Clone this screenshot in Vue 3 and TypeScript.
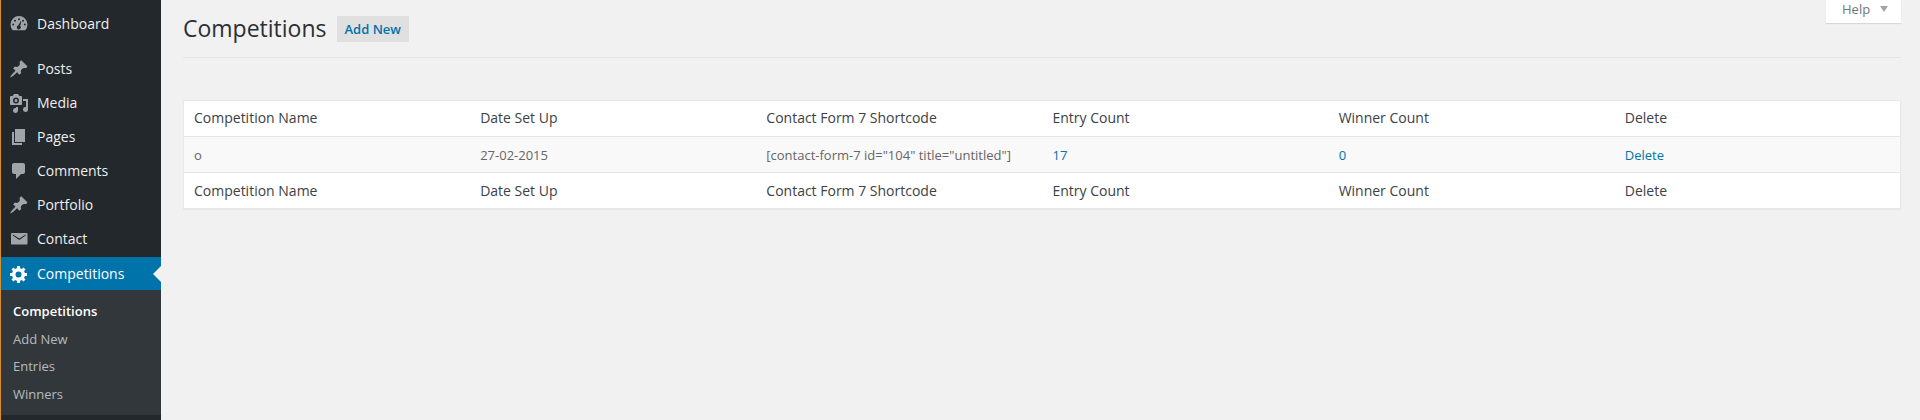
<script setup lang="ts">
interface MenuItem { label: string; icon: string; active?: boolean; gap?: boolean }
const menu: MenuItem[] = [
  { label: 'Dashboard', icon: 'dash', gap: true },
  { label: 'Posts', icon: 'pin' },
  { label: 'Media', icon: 'media' },
  { label: 'Pages', icon: 'pages' },
  { label: 'Comments', icon: 'comment' },
  { label: 'Portfolio', icon: 'pin' },
  { label: 'Contact', icon: 'mail' },
  { label: 'Competitions', icon: 'gear', active: true },
]
const sub = ['Competitions', 'Add New', 'Entries', 'Winners']
const cols = ['Competition Name', 'Date Set Up', 'Contact Form 7 Shortcode', 'Entry Count', 'Winner Count', 'Delete']
</script>

<template>
  <div class="page">
    <aside class="side">
      <ul class="menu">
        <li v-for="m in menu" :key="m.label" class="item" :class="{ active: m.active, gap: m.gap }">
          <svg class="ico" viewBox="0 0 20 20" aria-hidden="true">
            <path v-if="m.icon === 'dash'" fill-rule="evenodd" d="M3.76 16.24A8.5 8.5 0 1 1 16.24 16.24H3.76ZM10 4.3a1 1 0 1 0 0 2 1 1 0 0 0 0-2ZM6 5.8a1 1 0 1 0 0 2 1 1 0 0 0 0-2ZM14 5.8a1 1 0 1 0 0 2 1 1 0 0 0 0-2ZM4.2 9.4a1 1 0 1 0 0 2 1 1 0 0 0 0-2ZM15.8 9.4a1 1 0 1 0 0 2 1 1 0 0 0 0-2ZM11.7 7.2 9.2 11.6a1.9 1.9 0 1 0 2 .5L12.4 7.4Z" />
            <path v-else-if="m.icon === 'pin'" d="M10.44 3.02l1.82-1.82 6.36 6.35-1.83 1.82c-1.05-.68-2.48-.57-3.41.36l-.75.75c-.92.93-1.04 2.35-.35 3.41l-1.83 1.82-2.41-2.41-2.8 2.79c-.42.42-3.38 2.71-3.8 2.29s1.86-3.39 2.28-3.81l2.79-2.79L4.1 9.36l1.83-1.82c1.05.69 2.48.57 3.4-.36l.75-.75c.93-.92 1.05-2.35.36-3.41z" />
            <path v-else-if="m.icon === 'media'" fill-rule="evenodd" d="M13 11V4c0-.55-.45-1-1-1h-1.67L9 1H5L3.67 3H2c-.55 0-1 .45-1 1v7c0 .55.45 1 1 1h10c.55 0 1-.45 1-1ZM7 4.5a3 3 0 1 1 0 6 3 3 0 0 1 0-6ZM14 6h5v10.5a2.5 2.5 0 1 1-2-2.45V8h-3V6ZM7 14h2v3.5A2.5 2.5 0 1 1 7 15v-1Z M7 6a1.5 1.5 0 1 0 0 3 1.5 1.5 0 0 0 0-3Z" />
            <path v-else-if="m.icon === 'pages'" d="M6 15V2h10v13H6zm-1 1h8v2H3V5h2v11z" />
            <path v-else-if="m.icon === 'comment'" d="M5 2h9c1.1 0 2 .9 2 2v7c0 1.1-.9 2-2 2h-2l-5 5v-5H5c-1.1 0-2-.9-2-2V4c0-1.1.9-2 2-2z" />
            <path v-else-if="m.icon === 'mail'" fill-rule="evenodd" d="M3 4h14.500c.55 0 1 .45 1 1v9.500c0 .55-.45 1-1 1H3c-.55 0-1-.45-1-1V5c0-.55.45-1 1-1ZM3.800 6.500 10.250 11l6.450-4.500v-1l-6.450 4-6.450-4v1Z" />
            <path v-else fill-rule="evenodd" d="M18 12h-2.18c-.17.7-.44 1.35-.81 1.93l1.54 1.54-2.1 2.1-1.54-1.54c-.58.36-1.23.63-1.91.79V19H8v-2.18c-.68-.16-1.33-.43-1.91-.79l-1.54 1.54-2.12-2.12 1.54-1.54c-.36-.58-.63-1.23-.79-1.91H1V9.03h2.17c.16-.7.44-1.35.8-1.94L2.43 5.55l2.1-2.1 1.54 1.54c.58-.37 1.24-.64 1.93-.81V2h3v2.18c.68.16 1.33.43 1.91.79l1.54-1.54 2.12 2.12-1.54 1.54c.36.59.64 1.24.8 1.94H18V12ZM9.500 13.500a3 3 0 1 0 0-6 3 3 0 0 0 0 6Z" />
          </svg>
          <span>{{ m.label }}</span>
        </li>
      </ul>
      <ul class="sub">
        <li v-for="(s, i) in sub" :key="s" :class="{ cur: i === 0 }">{{ s }}</li>
      </ul>
    </aside>
    <main class="main">
      <div class="help">Help <i class="tri"></i></div>
      <header class="head">
        <h1>Competitions</h1>
        <span class="add">Add New</span>
      </header>
      <div class="rule"></div>
      <table class="tbl">
        <thead>
          <tr><th v-for="c in cols" :key="c">{{ c }}</th></tr>
        </thead>
        <tbody>
          <tr>
            <td>o</td>
            <td>27-02-2015</td>
            <td>[contact-form-7 id="104" title="untitled"]</td>
            <td><a>17</a></td>
            <td><a>0</a></td>
            <td><a>Delete</a></td>
          </tr>
        </tbody>
        <tfoot>
          <tr><th v-for="c in cols" :key="c">{{ c }}</th></tr>
        </tfoot>
      </table>
    </main>
  </div>
</template>

<style>
html, body { margin: 0; background: #f1f1f1; overflow: hidden; }
</style>

<style scoped>
.page {
  display: flex;
  height: 420px;
  overflow: hidden;
  font-family: "Open Sans", sans-serif;
  background: #f1f1f1;
  color: #444;
}
.side {
  width: 160px;
  flex: none;
  background: #23282d;
  border-left: 1px solid #d98e2b;
  height: 420px;
}
.menu, .sub { list-style: none; margin: 0; padding: 0; }
.menu { padding-top: 7px; }
.item {
  position: relative;
  display: flex;
  align-items: center;
  height: 34px;
  color: #eee;
  font-size: 14px;
  line-height: 34px;
}
.item.gap { margin-bottom: 11px; }
.item.active { background: #0073aa; color: #fff; margin-top: 1px; height: 33px; }
.item.active::after {
  content: "";
  position: absolute;
  right: 0;
  top: 50%;
  margin-top: -8px;
  border: 8px solid transparent;
  border-right-color: #f1f1f1;
  border-left-width: 0;
}
.ico { width: 20px; height: 20px; margin-left: 8px; margin-right: 8px; fill: #a0a5aa; flex: none; }
.active .ico { fill: #fff; }
.sub { background: #32373c; padding: 8px 0 7px; height: 110px; }
.sub li {
  font-size: 13px;
  line-height: 27.5px;
  padding-left: 12px;
  color: rgba(240, 245, 250, .7);
}
.sub li.cur { color: #fff; font-weight: 600; }
.main { position: relative; flex: 1; min-width: 0; padding: 0 19px 0 22px; }
.help {
  position: absolute;
  top: 0;
  right: 19px;
  width: 75px;
  height: 23px;
  box-sizing: border-box;
  padding-left: 16px;
  background: #fff;
  box-shadow: 0 1px 1px rgba(0, 0, 0, .1);
  font-size: 13px;
  line-height: 19px;
  color: #72777c;
}
.tri {
  display: inline-block;
  margin-left: 6px;
  vertical-align: 2px;
  border: 4px solid transparent;
  border-top: 6px solid #a0a5aa;
  border-bottom: 0;
}
.head { display: flex; align-items: center; height: 57px; }
h1 { margin: 0 0 2px; font-size: 23px; font-weight: 400; line-height: 30px; color: #2b3035; }
.add {
  margin-left: 10px;
  height: 26px;
  line-height: 26px;
  padding: 0 8px;
  background: #e0e0e0;
  color: #0073aa;
  font-size: 13px;
  font-weight: 600;
}
.rule { height: 1px; background: #e5e5e5; margin-bottom: 42px; }
.tbl {
  width: 100%;
  table-layout: fixed;
  border-collapse: separate;
  border-spacing: 0;
  background: #fff;
  border: 1px solid #e8e8e8;
  box-shadow: 0 1px 1px rgba(0, 0, 0, .04);
}
th, td { padding: 0 10px; height: 35px; text-align: left; }
thead th:not(:last-child) { width: 286.16px; box-sizing: border-box; }
thead th { border-bottom: 1px solid #e5e5e5; font-size: 14px; font-weight: 400; color: #3c4146; padding-bottom: 2px; height: 33px; }
tfoot th { border-top: 1px solid #e5e5e5; font-size: 14px; font-weight: 400; color: #3c4146; }
td { background: #f9f9f9; font-size: 13px; color: #666; }
td a { color: #0073aa; }
</style>
